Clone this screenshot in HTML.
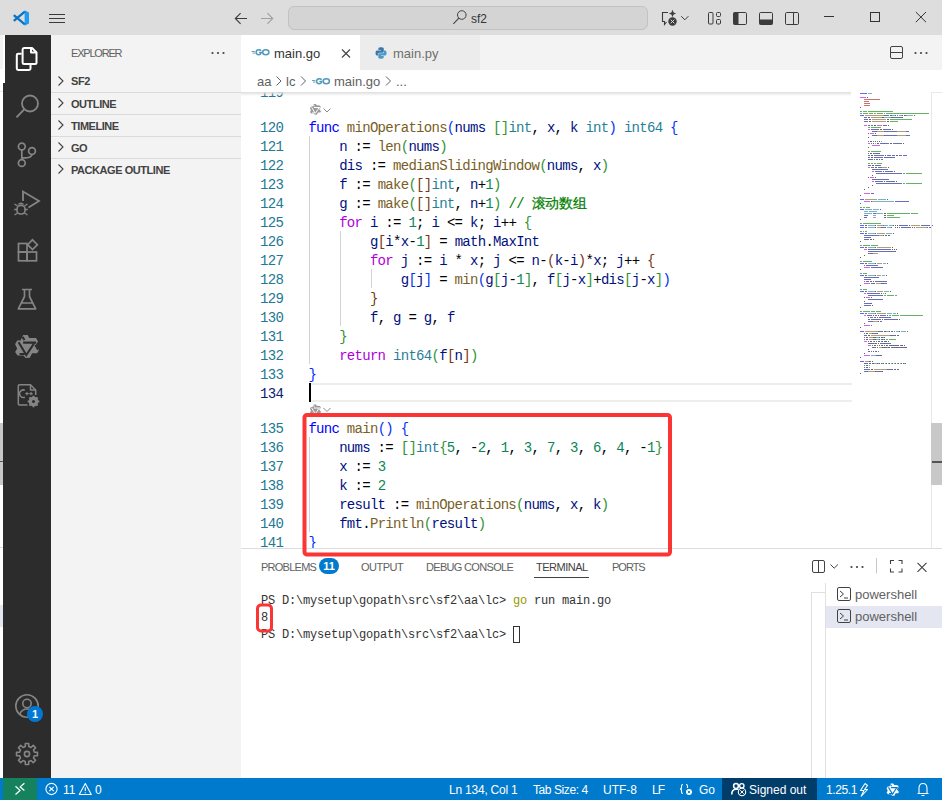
<!DOCTYPE html>
<html><head><meta charset="utf-8">
<style>
*{margin:0;padding:0;box-sizing:border-box}
html,body{width:942px;height:800px;overflow:hidden;background:#dddddd;font-family:"Liberation Sans",sans-serif;}
.a{position:absolute}
svg{position:absolute;overflow:visible}
#titlebar{left:0;top:0;width:942px;height:35px;background:#dddddd}
#cc{left:288px;top:6px;width:360px;height:24px;border:1px solid #c2c2c2;border-radius:6px;background:#d4d4d4}
#act{left:3px;top:35px;width:48px;height:743px;background:#2c2c2c}
#side{left:51px;top:35px;width:190px;height:743px;background:#f3f3f3}
#tabs{left:241px;top:35px;width:701px;height:35px;background:#f3f3f3}
#editor{left:241px;top:70px;width:701px;height:478px;background:#ffffff;overflow:hidden}
#panel{left:241px;top:548px;width:701px;height:230px;background:#ffffff;border-top:1px solid #dcdcdc}
#status{left:0;top:778px;width:942px;height:22px;background:#007acc}
.sec{position:absolute;left:0;width:190px;height:22px;border-top:1px solid #dadada;font-size:11px;font-weight:bold;letter-spacing:-0.45px;color:#424242;line-height:22px;padding-left:20px}
.code{position:absolute;left:67.4px;height:19px;line-height:19px;font-family:"Liberation Mono",monospace;font-size:14px;letter-spacing:-0.71px;white-space:pre;color:#000}
.ln{position:absolute;left:0;width:42.2px;text-align:right;height:19px;line-height:19px;font-family:"Liberation Mono",monospace;font-size:14px;letter-spacing:-0.71px;color:#237893}
.k{color:#0000ff}.f{color:#795e26}.p{color:#001080}.t{color:#267f99}.n{color:#098658}.c{color:#008000}.ctl{color:#af00db}
.ln.cur{color:#0b216f}
.b1{color:#0431fa}.b2{color:#319331}.b3{color:#7b3814}
.st{position:absolute;top:0;height:22px;line-height:22px;font-size:12px;color:#fff;white-space:nowrap}
.term{font-family:"Liberation Mono",monospace;font-size:12px;letter-spacing:-0.2px;white-space:pre;color:#333;height:17px;line-height:17px;padding-top:1px}
.pt{letter-spacing:-0.5px;padding-top:1px}
.st{padding-top:1px}
</style></head><body>
<div id="titlebar" class="a"></div>
<div id="cc" class="a"></div>
<div class="a" style="left:471px;top:7px;height:24px;line-height:24px;font-size:12px;color:#333">sf2</div>
<div id="act" class="a"></div>
<div id="side" class="a">
<div class="a" style="left:20px;top:1px;height:35px;line-height:35px;font-size:11px;letter-spacing:-1.2px;color:#616161">EXPLORER</div>
<div class="sec" style="top:35px;border-top:none">SF2</div>
<div class="sec" style="top:57px">OUTLINE</div>
<div class="sec" style="top:79px">TIMELINE</div>
<div class="sec" style="top:101px">GO</div>
<div class="sec" style="top:123px">PACKAGE OUTLINE</div>
</div>
<div id="tabs" class="a">
<div class="a" style="left:0;top:0;width:119px;height:35px;background:#fff"></div>
<div class="a" style="left:119px;top:0;width:120px;height:35px;background:#ececec"></div>
<div class="a" style="left:33px;top:1px;height:35px;line-height:35px;font-size:13px;color:#333333">main.go</div>
<div class="a" style="left:152px;top:1px;height:35px;line-height:35px;font-size:13px;color:#6f6f6f">main.py</div>
</div>
<div id="editor" class="a">
<div class="a" style="left:68px;top:313px;width:543px;height:19px;border-top:2px solid #eeeeee;border-bottom:2px solid #eeeeee"></div>
<div class="a" style="left:68px;top:66px;width:1px;height:228px;background:#d3d3d3"></div>
<div class="a" style="left:99px;top:161px;width:1px;height:95px;background:#d3d3d3"></div>
<div class="a" style="left:130px;top:199px;width:1px;height:19px;background:#d3d3d3"></div>
<div class="a" style="left:68px;top:367px;width:1px;height:95px;background:#d3d3d3"></div>
<div id="codewrap" class="a" style="left:0;top:2px;width:701px;height:478px">
<div class="ln" style="top:12px">119</div>
<div class="ln" style="top:47px">120</div>
<div class="code" style="top:47px"><span class="k">func</span> <span class="f">minOperations</span><span class="b1">(</span><span class="p">nums</span> <span class="b2">[]</span><span class="t">int</span>, <span class="p">x</span>, <span class="p">k</span> <span class="t">int</span><span class="b1">)</span> <span class="t">int64</span> <span class="b1">{</span></div>
<div class="ln" style="top:66px">121</div>
<div class="code" style="top:66px">    <span class="p">n</span> := <span class="f">len</span><span class="b2">(</span><span class="p">nums</span><span class="b2">)</span></div>
<div class="ln" style="top:85px">122</div>
<div class="code" style="top:85px">    <span class="p">dis</span> := <span class="f">medianSlidingWindow</span><span class="b2">(</span><span class="p">nums</span>, <span class="p">x</span><span class="b2">)</span></div>
<div class="ln" style="top:104px">123</div>
<div class="code" style="top:104px">    <span class="p">f</span> := <span class="f">make</span><span class="b2">(</span><span class="b3">[]</span><span class="t">int</span>, <span class="p">n</span>+<span class="n">1</span><span class="b2">)</span></div>
<div class="ln" style="top:123px">124</div>
<div class="code" style="top:123px">    <span class="p">g</span> := <span class="f">make</span><span class="b2">(</span><span class="b3">[]</span><span class="t">int</span>, <span class="p">n</span>+<span class="n">1</span><span class="b2">)</span> <span class="c">// <span style="font-size:14px;letter-spacing:-0.1px;-webkit-text-stroke:0.25px #008000">滚动数组</span></span></div>
<div class="ln" style="top:142px">125</div>
<div class="code" style="top:142px">    <span class="ctl">for</span> <span class="p">i</span> := <span class="n">1</span>; <span class="p">i</span> <= <span class="p">k</span>; <span class="p">i</span>++ <span class="b2">{</span></div>
<div class="ln" style="top:161px">126</div>
<div class="code" style="top:161px">        <span class="p">g</span><span class="b3">[</span><span class="p">i</span>*<span class="p">x</span>-<span class="n">1</span><span class="b3">]</span> = <span class="p">math</span>.<span class="p">MaxInt</span></div>
<div class="ln" style="top:180px">127</div>
<div class="code" style="top:180px">        <span class="ctl">for</span> <span class="p">j</span> := <span class="p">i</span> * <span class="p">x</span>; <span class="p">j</span> <= <span class="p">n</span>-<span class="b3">(</span><span class="p">k</span>-<span class="p">i</span><span class="b3">)</span>*<span class="p">x</span>; <span class="p">j</span>++ <span class="b3">{</span></div>
<div class="ln" style="top:199px">128</div>
<div class="code" style="top:199px">            <span class="p">g</span><span class="b1">[</span><span class="p">j</span><span class="b1">]</span> = <span class="f">min</span><span class="b1">(</span><span class="p">g</span><span class="b2">[</span><span class="p">j</span>-<span class="n">1</span><span class="b2">]</span>, <span class="p">f</span><span class="b2">[</span><span class="p">j</span>-<span class="p">x</span><span class="b2">]</span>+<span class="p">dis</span><span class="b2">[</span><span class="p">j</span>-<span class="p">x</span><span class="b2">]</span><span class="b1">)</span></div>
<div class="ln" style="top:218px">129</div>
<div class="code" style="top:218px">        <span class="b3">}</span></div>
<div class="ln" style="top:237px">130</div>
<div class="code" style="top:237px">        <span class="p">f</span>, <span class="p">g</span> = <span class="p">g</span>, <span class="p">f</span></div>
<div class="ln" style="top:256px">131</div>
<div class="code" style="top:256px">    <span class="b2">}</span></div>
<div class="ln" style="top:275px">132</div>
<div class="code" style="top:275px">    <span class="ctl">return</span> <span class="t">int64</span><span class="b2">(</span><span class="p">f</span><span class="b3">[</span><span class="p">n</span><span class="b3">]</span><span class="b2">)</span></div>
<div class="ln" style="top:294px">133</div>
<div class="code" style="top:294px"><span class="b1">}</span></div>
<div class="ln cur" style="top:313px">134</div>
<div class="ln" style="top:348px">135</div>
<div class="code" style="top:348px"><span class="k">func</span> <span class="f">main</span><span class="b1">()</span> <span class="b1">{</span></div>
<div class="ln" style="top:367px">136</div>
<div class="code" style="top:367px">    <span class="p">nums</span> := <span class="b2">[]</span><span class="t">int</span><span class="b2">{</span><span class="n">5</span>, -<span class="n">2</span>, <span class="n">1</span>, <span class="n">3</span>, <span class="n">7</span>, <span class="n">3</span>, <span class="n">6</span>, <span class="n">4</span>, -<span class="n">1</span><span class="b2">}</span></div>
<div class="ln" style="top:386px">137</div>
<div class="code" style="top:386px">    <span class="p">x</span> := <span class="n">3</span></div>
<div class="ln" style="top:405px">138</div>
<div class="code" style="top:405px">    <span class="p">k</span> := <span class="n">2</span></div>
<div class="ln" style="top:424px">139</div>
<div class="code" style="top:424px">    <span class="p">result</span> := <span class="f">minOperations</span><span class="b2">(</span><span class="p">nums</span>, <span class="p">x</span>, <span class="p">k</span><span class="b2">)</span></div>
<div class="ln" style="top:443px">140</div>
<div class="code" style="top:443px">    <span class="p">fmt</span>.<span class="f">Println</span><span class="b2">(</span><span class="p">result</span><span class="b2">)</span></div>
<div class="ln" style="top:462px">141</div>
<div class="code" style="top:462px"><span class="b1">}</span></div>
</div>
<div class="a" style="left:68px;top:313px;width:2px;height:19px;background:#000"></div>
<div class="a" style="left:0;top:0;width:701px;height:22px;background:#fff"></div>
<div class="a" style="left:0;top:22px;width:610px;height:4px;background:linear-gradient(#dddddd,rgba(255,255,255,0))"></div>
<div class="a bc" style="left:16px;top:1px;height:22px;line-height:22px;font-size:13px;color:#616161;white-space:nowrap">aa</div>
<div class="a bc" style="left:45px;top:1px;height:22px;line-height:22px;font-size:13px;color:#616161;white-space:nowrap">lc</div>
<div class="a bc" style="left:93px;top:1px;height:22px;line-height:22px;font-size:13px;color:#616161;white-space:nowrap">main.go</div>
<div class="a bc" style="left:155px;top:1px;height:22px;line-height:22px;font-size:13px;color:#616161;white-space:nowrap">...</div>
</div>
<div id="panel" class="a">
<div class="a pt" style="left:20px;top:0;height:35px;line-height:35px;font-size:11px;letter-spacing:-0.75px;color:#616161">PROBLEMS</div>
<div class="a" style="left:78px;top:9px;width:20px;height:16px;border-radius:8px;background:#007acc;color:#fff;font-size:11px;font-weight:bold;text-align:center;line-height:16px">11</div>
<div class="a pt" style="left:120px;top:0;height:35px;line-height:35px;font-size:11px;color:#616161">OUTPUT</div>
<div class="a pt" style="left:185px;top:0;height:35px;line-height:35px;font-size:11px;letter-spacing:-0.68px;color:#616161">DEBUG CONSOLE</div>
<div class="a pt" style="left:295px;top:0;height:35px;line-height:35px;font-size:11px;color:#424242">TERMINAL</div>
<div class="a" style="left:293px;top:28px;width:55px;height:1px;background:#424242"></div>
<div class="a pt" style="left:371px;top:0;height:35px;line-height:35px;font-size:11px;letter-spacing:-1px;color:#616161">PORTS</div>
<div class="a term" style="left:20px;top:43px">PS D:\mysetup\gopath\src\sf2\aa\lc&gt; <span style="color:#949800">go</span> run main.go</div>
<div class="a term" style="left:20px;top:60px">8</div>
<div class="a term" style="left:20px;top:77px">PS D:\mysetup\gopath\src\sf2\aa\lc&gt; </div>
<div class="a" style="left:272px;top:77px;width:7px;height:17px;border:1px solid #333"></div>
<div class="a" style="left:570px;top:43px;width:1px;height:187px;background:#e0e0e0"></div>
<div class="a" style="left:570px;top:43px;width:14px;height:1px;background:#e0e0e0"></div>
<div class="a" style="left:584px;top:34px;width:1px;height:196px;background:#e0e0e0"></div>
<div class="a" style="left:585px;top:57px;width:116px;height:22px;background:#e4e6f1"></div>
<div class="a" style="left:614px;top:35px;height:22px;line-height:22px;font-size:13px;color:#616161">powershell</div>
<div class="a" style="left:614px;top:57px;height:22px;line-height:22px;font-size:13px;color:#616161">powershell</div>
</div>
<div id="status" class="a">
<div class="a" style="left:3px;top:0;width:34px;height:22px;background:#16825d"></div>
<div class="st" style="left:63px">11</div>
<div class="st" style="left:95px">0</div>
<div class="st" style="left:449px;letter-spacing:-0.22px">Ln 134, Col 1</div>
<div class="st" style="left:533px;letter-spacing:-0.42px">Tab Size: 4</div>
<div class="st" style="left:603px">UTF-8</div>
<div class="st" style="left:652px;letter-spacing:-1px">LF</div>
<div class="st" style="left:699px">Go</div>
<div class="a" style="left:722px;top:0;width:95px;height:22px;background:#003d6b"></div>
<div class="st" style="left:749px">Signed out</div>
<div class="st" style="left:826px;letter-spacing:-0.4px">1.25.1</div>
</div>
<svg class="a" style="left:0;top:0" width="942" height="800" viewBox="0 0 942 800" fill="none">
<!-- left wrap strip -->
<rect x="0" y="35" width="3" height="34" fill="#f3f3f3"/>
<rect x="0" y="69" width="3" height="14" fill="#ffffff"/>
<rect x="0" y="83" width="3" height="695" fill="#ffffff"/>
<rect x="0" y="91" width="3" height="1" fill="#e8e8e8"/>
<rect x="0" y="423" width="3" height="62" fill="#c8c8c8"/>
<rect x="0" y="461" width="3" height="1" fill="#555"/>
<rect x="0" y="547" width="3" height="1" fill="#dcdcdc"/>
<rect x="0" y="605" width="3" height="22" fill="#e4e6f1"/>
<rect x="0" y="778" width="3" height="22" fill="#007acc"/>
<!-- active indicator -->
<rect x="3" y="35" width="2" height="48" fill="#ffffff"/>
<!-- VS Code logo -->
<g transform="translate(13,10)">
<path d="M11.6 0.3 L16 2.4 V13.6 L11.6 15.7 Z" fill="#1f9cf0"/>
<path d="M11.8 1.6 L0.8 10.9 M11.8 14.4 L0.8 5.1" stroke="#0a74c4" stroke-width="2.3"/>
</g>
<!-- hamburger -->
<path d="M49 14.5H65M49 18.5H65M49 22.5H65" stroke="#3b3b3b" stroke-width="1.1"/>
<!-- back / forward -->
<path d="M247 18.5H235.8M240.6 13.2L235.3 18.5L240.6 23.8" stroke="#3b3b3b" stroke-width="1.1"/>
<path d="M261 18.5H272.2M267.4 13.2L272.7 18.5L267.4 23.8" stroke="#a0a0a0" stroke-width="1.1"/>
<!-- search in command center -->
<circle cx="461.8" cy="15" r="4.3" stroke="#424242" stroke-width="1"/>
<path d="M458.8 18.2L453.4 23.8" stroke="#424242" stroke-width="1.1"/>
<!-- copilot icon -->
<path d="M668 12.5H662.5V21.5H664.5V24.5L666.5 22" stroke="#3b3b3b" stroke-width="1.1" fill="none"/>
<path d="M672.5 9.8 L673.6 12.4 L676.2 13.5 L673.6 14.6 L672.5 17.2 L671.4 14.6 L668.8 13.5 L671.4 12.4 Z" fill="#3b3b3b"/>
<circle cx="672.5" cy="21.5" r="4.2" fill="#3b3b3b"/>
<path d="M670.7 19.7L674.3 23.3M674.3 19.7L670.7 23.3" stroke="#dddddd" stroke-width="1"/>
<path d="M681.2 16.2L684.8 19.8L688.4 16.2" stroke="#3b3b3b" stroke-width="1"/>
<!-- layout icons -->
<rect x="708.5" y="12.5" width="4.5" height="11.5" rx="1" stroke="#3b3b3b" stroke-width="1"/>
<rect x="716.5" y="12.5" width="4" height="4" rx="1" stroke="#3b3b3b" stroke-width="1"/>
<rect x="716.5" y="19.5" width="4" height="4.5" rx="1" stroke="#3b3b3b" stroke-width="1"/>
<rect x="733.5" y="12.5" width="13" height="12" rx="1.2" stroke="#3b3b3b" stroke-width="1"/>
<rect x="733.5" y="12.5" width="5" height="12" fill="#3b3b3b"/>
<rect x="759.5" y="12.5" width="13" height="12" rx="1.2" stroke="#3b3b3b" stroke-width="1"/>
<rect x="759.5" y="19.5" width="13" height="5" fill="#3b3b3b"/>
<rect x="785.5" y="12.5" width="13" height="12" rx="1.2" stroke="#3b3b3b" stroke-width="1"/>
<path d="M793.5 12.5V24.5" stroke="#3b3b3b" stroke-width="1"/>
<!-- window controls -->
<path d="M824 16.5H834" stroke="#333" stroke-width="1"/>
<rect x="870.5" y="12.5" width="9" height="9" stroke="#333" stroke-width="1"/>
<path d="M915.8 12L926 22.2M926 12L915.8 22.2" stroke="#333" stroke-width="1"/>
</svg>

<svg class="a" style="left:0;top:0" width="942" height="800" viewBox="0 0 942 800" fill="none">
<!-- activity: explorer (white) -->
<g stroke="#ffffff" stroke-width="2" stroke-linejoin="round">
<path d="M22.6 49.5 Q22.6 48 24 48 H32 L36.5 52.5 V62.5 Q36.5 64 35 64 H24 Q22.6 64 22.6 62.5 Z"/>
<path d="M31 48 V52.6 H36.5"/>
<path d="M21.6 53.8 H18.2 Q16.8 53.8 16.8 55.2 V68.6 Q16.8 70 18.2 70 H29 Q30.5 70 30.5 68.6 V64.8"/>
</g>
<!-- search -->
<circle cx="30" cy="103.5" r="8" stroke="#858585" stroke-width="1.8"/>
<path d="M24.2 109.3L16.5 117.3" stroke="#858585" stroke-width="1.9"/>
<!-- scm -->
<g stroke="#858585" stroke-width="1.7">
<circle cx="21.8" cy="146.5" r="3.4"/>
<circle cx="32" cy="151" r="3.4"/>
<circle cx="21.8" cy="163" r="3.4"/>
<path d="M21.8 149.9V159.6M32 154.4 Q31.5 157.8 26 157.8 H21.8"/>
</g>
<!-- debug -->
<g stroke="#858585" stroke-width="1.8">
<path d="M23 201V191.5L39 201L28.5 207.5"/>
</g>
<g fill="#858585">
<path d="M17.5 204.5 Q21 200.5 24.5 204.5 Z"/>
<rect x="17" y="205.5" width="8" height="8.5" rx="3.5" stroke="#858585" stroke-width="1.6" fill="none"/>
<path d="M14.5 204L17.5 206M27.5 204L24.5 206M14.2 209.5H17M24.8 209.5H27.8M14.5 215L17.5 213M27.5 215L24.5 213" stroke="#858585" stroke-width="1.4"/>
</g>
<!-- extensions -->
<g stroke="#858585" stroke-width="1.7">
<rect x="18.5" y="243.5" width="8.5" height="8.5"/>
<rect x="18.5" y="252" width="8.5" height="8.8"/>
<rect x="27" y="252" width="9.5" height="8.8"/>
<path d="M32.5 239.8 L37.4 244.7 L32.5 249.6 L27.6 244.7 Z"/>
</g>
<!-- testing -->
<g stroke="#858585" stroke-width="1.7" stroke-linejoin="round">
<path d="M22 289.5H32M24.5 289.5V296.5L18.3 308.8H35.7L29.5 296.5V289.5M21 303H33"/>
</g>
<!-- knot icon -->
<g transform="translate(13,333) scale(0.035)">
<path d="M290 60 L420 60 L465 140 L660 145 L715 240 L655 330 L745 475 L690 575 L545 580 L480 710 L360 715 L300 640 L130 640 L60 540 L120 440 L60 320 L120 215 L215 215 Z" fill="#858585"/>
<path d="M160 265 L380 630 L600 300 M290 275 L660 275 M270 110 L330 200 M640 340 L720 480 M190 600 L330 600" stroke="#2c2c2c" stroke-width="60" fill="none"/>
</g>
<!-- c++ config -->
<g stroke="#858585" stroke-width="1.5" stroke-linejoin="round">
<path d="M27.5 405 H19.5 Q18.3 405 18.3 403.8 V386 Q18.3 384.8 19.5 384.8 H30.5 L35.7 390 V395"/>
<path d="M30.5 384.8V390H35.7"/>
<path d="M24.8 390.2 A3.8 3.8 0 1 0 24.8 397.2"/>
</g>
<path d="M25.3 393.6H28.7M27 391.9V395.3M29.3 393.6H32.7M31 391.9V395.3" stroke="#858585" stroke-width="1.1"/>
<g transform="translate(33.5,401.5)">
<circle r="3.6" stroke="#858585" stroke-width="2.4"/>
<path d="M0 -5.8V5.8M-5.8 0H5.8M-4.1 -4.1L4.1 4.1M4.1 -4.1L-4.1 4.1" stroke="#858585" stroke-width="2"/>
<circle r="1.5" fill="#2c2c2c"/>
</g>
<!-- accounts -->
<circle cx="27" cy="706" r="11.2" stroke="#858585" stroke-width="1.6"/>
<circle cx="27" cy="703.5" r="4.2" stroke="#858585" stroke-width="1.6"/>
<path d="M19.5 714.5 Q22 709 27 709 Q32 709 34.5 714.5" stroke="#858585" stroke-width="1.6"/>
<circle cx="35" cy="714" r="8" fill="#0078d4"/>
<!-- gear -->
<g transform="translate(27,754)" stroke="#858585" stroke-width="1.6" stroke-linejoin="round">
<path d="M-1.77 -7.39 L-1.66 -10.47 L1.66 -10.47 L1.77 -7.39 L3.97 -6.48 L6.23 -8.58 L8.58 -6.23 L6.48 -3.97 L7.39 -1.77 L10.47 -1.66 L10.47 1.66 L7.39 1.77 L6.48 3.97 L8.58 6.23 L6.23 8.58 L3.97 6.48 L1.77 7.39 L1.66 10.47 L-1.66 10.47 L-1.77 7.39 L-3.97 6.48 L-6.23 8.58 L-8.58 6.23 L-6.48 3.97 L-7.39 1.77 L-10.47 1.66 L-10.47 -1.66 L-7.39 -1.77 L-6.48 -3.97 L-8.58 -6.23 L-6.23 -8.58 L-3.97 -6.48 Z"/>
<circle r="2.6"/>
</g>
<!-- sidebar chevrons and ... -->
<g stroke="#424242" stroke-width="1.1">
<path d="M58.5 76.5L63 81L58.5 85.5M58.5 98.5L63 103L58.5 107.5M58.5 120.5L63 125L58.5 129.5M58.5 142.5L63 147L58.5 151.5M58.5 164.5L63 169L58.5 173.5"/>
</g>
<g fill="#424242"><circle cx="212.5" cy="53" r="1.1"/><circle cx="218" cy="53" r="1.1"/><circle cx="223.5" cy="53" r="1.1"/></g>
</svg>

<svg class="a" style="left:0;top:0" width="942" height="800" viewBox="0 0 942 800" fill="none">
<defs>
<g id="knot">
<path d="M290 60 L420 60 L465 140 L660 145 L715 240 L655 330 L745 475 L690 575 L545 580 L480 710 L360 715 L300 640 L130 640 L60 540 L120 440 L60 320 L120 215 L215 215 Z"/>
</g>
<g id="knotl">
<path d="M160 265 L380 630 L600 300 M290 275 L660 275 M270 110 L330 200 M640 340 L720 480 M190 600 L330 600" stroke-width="60" fill="none"/>
</g>
<g id="goicon">
<path d="M0 3.2 H3.4 M1 4.8 H3.4" stroke="#519aba" stroke-width="0.9"/>
<path d="M9.6 2.4 Q8.9 1.4 7.5 1.4 Q4.6 1.4 4.6 4 Q4.6 6.4 7.2 6.4 Q9.3 6.4 9.8 4.3 H7.4" stroke="#519aba" stroke-width="1.5"/>
<ellipse cx="14.3" cy="3.9" rx="3.1" ry="2.5" stroke="#519aba" stroke-width="1.5"/>
</g>
</defs>
<!-- tab go icon -->
<use href="#goicon" transform="translate(251.5,48.3)"/>
<!-- close x -->
<path d="M342 49.5L350 57.5M350 49.5L342 57.5" stroke="#424242" stroke-width="1.1"/>
<!-- python icon -->
<g transform="translate(375.5,47)">
<path d="M5.5 0.3 C2.8 0.3 2.9 1.5 2.9 1.5 V3 H5.6 V3.5 H1.8 C1.8 3.5 0 3.3 0 6 C0 8.7 1.6 8.6 1.6 8.6 H2.6 V7.3 C2.6 7.3 2.5 5.7 4.1 5.7 H6.8 C6.8 5.7 8.3 5.7 8.3 4.3 V1.8 C8.3 1.8 8.5 0.3 5.5 0.3 Z" fill="#3c78a8"/>
<path d="M5.6 11.7 C8.3 11.7 8.2 10.5 8.2 10.5 V9 H5.5 V8.5 H9.3 C9.3 8.5 11.1 8.7 11.1 6 C11.1 3.3 9.5 3.4 9.5 3.4 H8.5 V4.7 C8.5 4.7 8.6 6.3 7 6.3 H4.3 C4.3 6.3 2.8 6.3 2.8 7.7 V10.2 C2.8 10.2 2.6 11.7 5.6 11.7 Z" fill="#4b9ac8"/>
</g>
<!-- breadcrumb chevrons -->
<path d="M276.5 76.5L281 81L276.5 85.5M301 76.5L305.5 81L301 85.5M386 76.5L390.5 81L386 85.5" stroke="#616161" stroke-width="1"/>
<use href="#goicon" transform="translate(312,77.3)"/>
<!-- editor actions -->
<rect x="890.5" y="46.5" width="12" height="12" rx="1.5" stroke="#424242" stroke-width="1"/>
<path d="M890.5 52.5H902.5" stroke="#424242" stroke-width="1"/>
<g fill="#424242"><circle cx="915.5" cy="53" r="1.1"/><circle cx="921" cy="53" r="1.1"/><circle cx="926.5" cy="53" r="1.1"/></g>
<!-- codelens icons -->
<use href="#knot" transform="translate(309,103) scale(0.0165)" fill="#9a9a9a"/><use href="#knotl" transform="translate(309,103) scale(0.0165)" stroke="#ffffff"/>
<path d="M323.5 108.5L327 112L330.5 108.5" stroke="#8a8a8a" stroke-width="1"/>
<use href="#knot" transform="translate(309,403.5) scale(0.0165)" fill="#9a9a9a"/><use href="#knotl" transform="translate(309,403.5) scale(0.0165)" stroke="#ffffff"/>
<path d="M323.5 408L327 411.5L330.5 408" stroke="#8a8a8a" stroke-width="1"/>
<!-- panel actions -->
<rect x="812.5" y="560.5" width="12" height="12" rx="1.5" stroke="#424242" stroke-width="1"/>
<path d="M818.5 560.5V572.5" stroke="#424242" stroke-width="1"/>
<path d="M830.5 564.5L834.2 568.2L837.9 564.5" stroke="#424242" stroke-width="1"/>
<g fill="#424242"><circle cx="851.5" cy="567" r="1.1"/><circle cx="857" cy="567" r="1.1"/><circle cx="862.5" cy="567" r="1.1"/></g>
<path d="M876.5 558V573.5" stroke="#c8c8c8" stroke-width="1"/>
<path d="M890.5 564V560.5H894M898.5 560.5H902V564M902 568.5V572H898.5M894 572H890.5V568.5" stroke="#424242" stroke-width="1.1"/>
<path d="M917.5 562.8L926.5 571.8M926.5 562.8L917.5 571.8" stroke="#424242" stroke-width="1.1"/>
<!-- terminal icons -->
<rect x="837.5" y="587.5" width="13" height="13" rx="1.5" stroke="#424242" stroke-width="1"/>
<path d="M840 591L843.5 594L840 597M844 598H848" stroke="#424242" stroke-width="1"/>
<rect x="837.5" y="609.5" width="13" height="13" rx="1.5" stroke="#424242" stroke-width="1"/>
<path d="M840 613L843.5 616L840 619M844 620H848" stroke="#424242" stroke-width="1"/>
<!-- status icons -->
<path d="M15.5 786.3L20 790.4L15.5 794.5M24.4 783.3L20.2 786.9L24.4 790.5" stroke="#fff" stroke-width="1.2"/>
<circle cx="51.5" cy="789" r="5.6" stroke="#fff" stroke-width="1.1"/>
<path d="M49.3 786.8L53.7 791.2M53.7 786.8L49.3 791.2" stroke="#fff" stroke-width="1.1"/>
<path d="M85.3 783.5L91.3 794.5H79.3Z" stroke="#fff" stroke-width="1.1" stroke-linejoin="round"/>
<path d="M85.3 787.5V791M85.3 792.3V793.3" stroke="#fff" stroke-width="1.1"/>
<path d="M683 784.5 Q681.5 784.5 681.5 786 V788 L680.5 789 L681.5 790 V792 Q681.5 793.5 683 793.5" stroke="#fff" stroke-width="1.1"/>
<circle cx="689" cy="792" r="3" fill="#fff"/><path d="M687.8 790.8L690.2 793.2M690.2 790.8L687.8 793.2" stroke="#007acc" stroke-width="0.9"/>
<path d="M686 784.5 Q687.5 784.5 687.5 786 V788" stroke="#fff" stroke-width="1.1"/>
<circle cx="736" cy="786" r="2.4" stroke="#fff" stroke-width="1.5"/>
<circle cx="741.8" cy="785.8" r="2.2" stroke="#fff" stroke-width="1.4"/>
<path d="M731.8 794.5 Q731.5 789.5 736 789.3 H738.5" stroke="#fff" stroke-width="1.6"/>
<circle cx="742" cy="792" r="3.7" fill="#003d6b" stroke="#fff" stroke-width="1.1"/>
<path d="M740.3 790.3L743.7 793.7M743.7 790.3L740.3 793.7" stroke="#fff" stroke-width="1"/>
<path d="M865 783.5L860.5 790.5H864L861 796.5M865 783.5L867.5 785.5L864.5 789.5H867.5L861 796.5" stroke="#fff" stroke-width="1.1" stroke-linejoin="round"/>
<use href="#knot" transform="translate(885.5,782.5) scale(0.0185)" fill="#fff"/><use href="#knotl" transform="translate(885.5,782.5) scale(0.0185)" stroke="#007acc"/>
<path d="M919 793.5V788.5 Q919 783.5 923 783.5 Q927 783.5 927 788.5 V793.5 H919 M917.5 793.5H928.5M921.5 795.5H924.5" stroke="#fff" stroke-width="1.1"/>
<!-- red boxes -->
<rect x="304.5" y="415" width="365.5" height="139.5" rx="2.5" stroke="#fb3434" stroke-width="4"/>
<rect x="257.5" y="605" width="14" height="26" rx="3.5" stroke="#fb3434" stroke-width="3"/>
</svg>
<div class="a" style="left:27px;top:706px;width:16px;height:16px;line-height:16px;text-align:center;font-size:11px;font-weight:bold;color:#fff">1</div>

<svg class="a" style="left:0;top:0" width="942" height="800" viewBox="0 0 942 800" fill="none" opacity="0.6">
<path d="M860 93.5h7M860 115.5h4M860 199.5h4M895 201.5h5M860 209.5h4M873 213.5h3M860 225.5h4M860 227.5h4M860 233.5h4M860 247.5h4M860 263.5h4M860 275.5h4M860 291.5h4M860 313.5h4M860 331.5h4M860 361.5h4" stroke="#0000ff" stroke-width="1"/>
<path d="M868 93.5h4M892 115.5h3M899 115.5h3M906 115.5h7M884 117.5h7M878 199.5h8M872 201.5h22M865 209.5h7M873 209.5h6M864 211.5h4M869 211.5h8M864 213.5h8M876 213.5h7M873 215.5h3M873 217.5h3M868 225.5h7M884 225.5h4M889 225.5h4M868 227.5h7M887 227.5h4M868 233.5h7M886 233.5h6M868 247.5h7M868 263.5h7M883 263.5h3M868 275.5h7M882 275.5h3M868 291.5h7M884 291.5h5M868 313.5h7M887 313.5h5M893 313.5h3M886 331.5h3M896 331.5h3M901 331.5h5M876 337.5h3M876 339.5h3M871 355.5h5M874 363.5h3" stroke="#267f99" stroke-width="1"/>
<path d="M860 97.5h6M864 125.5h3M877 125.5h5M868 129.5h2M870 133.5h4M868 143.5h2M872 145.5h8M868 167.5h2M872 171.5h2M870 177.5h4M872 181.5h2M864 193.5h6M864 201.5h6M864 249.5h3M864 267.5h6M864 283.5h6M864 293.5h2M866 297.5h4M864 315.5h2M864 325.5h6M864 341.5h3M868 345.5h3M864 355.5h6" stroke="#af00db" stroke-width="1"/>
<path d="M867 97.5h1M860 107.5h1M884 115.5h1M890 115.5h2M895 115.5h1M902 115.5h1M904 115.5h2M914 115.5h1M868 117.5h2M882 117.5h2M891 117.5h2M902 117.5h1M869 119.5h2M887 119.5h2M869 121.5h2M887 121.5h2M869 125.5h1M874 125.5h2M888 125.5h1M880 129.5h2M892 129.5h1M876 131.5h1M884 131.5h1M868 133.5h1M875 133.5h1M876 135.5h1M884 135.5h1M868 137.5h1M870 141.5h2M875 141.5h1M879 141.5h1M873 143.5h1M877 143.5h2M890 143.5h2M903 143.5h1M868 147.5h1M870 153.5h2M877 153.5h1M879 153.5h1M871 155.5h2M885 155.5h1M896 155.5h2M871 157.5h2M884 157.5h1M874 159.5h1M879 159.5h1M872 165.5h2M875 167.5h2M888 167.5h1M883 171.5h1M894 171.5h1M872 175.5h1M868 177.5h1M875 177.5h1M884 181.5h1M896 181.5h1M872 185.5h1M868 187.5h1M864 189.5h1M860 195.5h1M887 199.5h1M871 201.5h1M860 203.5h1M880 209.5h1M884 213.5h2M884 215.5h2M884 217.5h2M860 219.5h1M865 225.5h1M875 225.5h1M893 225.5h1M895 225.5h1M897 225.5h1M909 225.5h1M931 225.5h0M865 227.5h1M875 227.5h1M881 227.5h1M891 227.5h1M895 227.5h1M897 227.5h1M912 227.5h1M914 227.5h1M927 227.5h1M865 233.5h1M875 233.5h1M893 233.5h1M883 235.5h1M885 235.5h2M888 235.5h2M870 239.5h2M873 239.5h1M860 241.5h1M865 247.5h1M875 247.5h1M892 247.5h1M892 249.5h1M894 249.5h1M896 249.5h1M895 251.5h1M864 255.5h1M860 257.5h1M865 263.5h1M875 263.5h1M887 263.5h1M860 269.5h1M865 275.5h1M875 275.5h1M886 275.5h1M870 279.5h1M871 281.5h1M873 281.5h1M881 283.5h2M860 285.5h1M865 291.5h1M875 291.5h1M890 291.5h1M881 293.5h1M885 293.5h1M882 295.5h1M864 297.5h1M871 297.5h1M864 301.5h1M871 303.5h1M872 305.5h1M860 307.5h1M865 313.5h1M875 313.5h1M897 313.5h1M873 315.5h1M878 315.5h1M887 315.5h1M875 317.5h1M877 317.5h1M869 319.5h1M882 319.5h1M897 319.5h1M899 319.5h1M878 321.5h1M864 323.5h1M860 327.5h1M878 331.5h1M884 331.5h2M889 331.5h1M892 331.5h1M899 331.5h1M907 331.5h1M866 333.5h2M872 333.5h1M877 333.5h1M868 335.5h2M890 335.5h1M895 335.5h1M898 335.5h1M866 337.5h2M873 337.5h3M879 337.5h1M882 337.5h1M884 337.5h1M866 339.5h2M873 339.5h3M879 339.5h1M882 339.5h1M884 339.5h1M870 341.5h2M874 341.5h1M878 341.5h2M882 341.5h1M885 341.5h2M888 341.5h1M869 343.5h1M871 343.5h1M873 343.5h1M875 343.5h2M878 343.5h1M884 343.5h1M874 345.5h2M879 345.5h1M882 345.5h1M886 345.5h2M890 345.5h2M893 345.5h1M895 345.5h2M898 345.5h1M901 345.5h2M904 345.5h1M873 347.5h1M875 347.5h1M877 347.5h1M882 347.5h1M884 347.5h1M886 347.5h1M888 347.5h2M892 347.5h1M894 347.5h1M896 347.5h2M901 347.5h1M903 347.5h1M905 347.5h2M868 349.5h1M869 351.5h1M873 351.5h1M876 351.5h1M864 353.5h1M876 355.5h1M878 355.5h1M880 355.5h2M860 357.5h1M869 361.5h2M872 361.5h1M869 363.5h2M872 363.5h2M877 363.5h1M879 363.5h1M881 363.5h1M883 363.5h1M886 363.5h1M889 363.5h1M892 363.5h1M895 363.5h1M898 363.5h1M901 363.5h1M903 363.5h1M905 363.5h1M866 365.5h2M866 367.5h2M871 369.5h2M887 369.5h1M892 369.5h1M895 369.5h1M898 369.5h1M867 371.5h1M875 371.5h1M882 371.5h1M860 373.5h1" stroke="#000000" stroke-width="1"/>
<path d="M864 99.5h16M864 101.5h5M864 103.5h6M864 105.5h6" stroke="#a31515" stroke-width="1"/>
<path d="M860 111.5h2M863 111.5h4M868 111.5h25M860 113.5h2M863 113.5h5M869 113.5h4M874 113.5h2M877 113.5h6M884 113.5h1M886 113.5h43M890 119.5h22M890 121.5h8M868 127.5h2M871 127.5h10M868 151.5h2M871 151.5h10M868 163.5h2M871 163.5h2M874 163.5h2M877 163.5h5M903 173.5h2M906 173.5h16M903 183.5h2M906 183.5h16M860 207.5h2M863 207.5h2M866 207.5h4M887 213.5h23M911 213.5h7M887 215.5h7M887 217.5h13M860 223.5h2M863 223.5h18M860 231.5h2M863 231.5h1M865 231.5h2M860 245.5h2M863 245.5h7M871 245.5h7M860 261.5h2M863 261.5h9M860 273.5h2M863 273.5h4M860 289.5h2M863 289.5h4M884 295.5h2M887 295.5h7M895 295.5h2M860 311.5h2M863 311.5h7M871 311.5h4M876 311.5h5M889 315.5h2M892 315.5h7M900 315.5h23M886 339.5h2M889 339.5h7" stroke="#008000" stroke-width="1"/>
<path d="M865 115.5h19M871 117.5h11M872 119.5h14M872 121.5h14M877 131.5h7M897 131.5h9M877 135.5h7M897 135.5h9M882 167.5h5M865 199.5h12M877 225.5h6M911 225.5h9M877 227.5h4M916 227.5h11M877 233.5h8M879 235.5h4M877 247.5h14M873 253.5h5M877 263.5h5M877 275.5h4M876 283.5h5M877 291.5h6M877 313.5h9M873 321.5h5M865 331.5h13M869 333.5h3M871 335.5h19M869 337.5h4M869 339.5h4M879 347.5h3M865 361.5h4M874 369.5h13M868 371.5h7" stroke="#795e26" stroke-width="1"/>
<path d="M885 115.5h4M897 115.5h1M864 117.5h3M893 117.5h9M864 119.5h4M864 121.5h4M868 125.5h1M871 125.5h2M883 125.5h4M871 129.5h8M883 129.5h8M872 131.5h4M885 131.5h12M906 131.5h3M872 135.5h4M885 135.5h12M906 135.5h4M868 141.5h1M873 141.5h1M877 141.5h1M871 143.5h1M880 143.5h9M893 143.5h9M868 153.5h1M873 153.5h4M878 153.5h1M868 155.5h2M874 155.5h10M887 155.5h4M892 155.5h3M899 155.5h3M903 155.5h4M868 157.5h2M874 157.5h9M885 157.5h10M868 159.5h5M876 159.5h2M881 159.5h2M868 165.5h3M875 165.5h6M871 167.5h3M878 167.5h4M872 169.5h16M875 171.5h7M885 171.5h8M876 173.5h26M872 179.5h17M875 181.5h8M886 181.5h9M876 183.5h26M871 193.5h3M900 201.5h9M864 215.5h4M864 217.5h3M866 225.5h1M883 225.5h1M899 225.5h9M921 225.5h9M933 225.5h-2M866 227.5h1M882 227.5h4M899 227.5h1M901 227.5h10M929 227.5h2M866 233.5h1M864 235.5h15M864 237.5h7M864 239.5h5M866 247.5h1M868 249.5h23M868 251.5h27M868 253.5h5M866 263.5h1M864 265.5h1M866 265.5h12M871 267.5h12M866 275.5h1M864 277.5h15M864 279.5h6M864 281.5h1M866 281.5h3M870 281.5h1M875 281.5h12M871 283.5h4M883 283.5h4M866 291.5h1M867 293.5h13M868 295.5h14M868 299.5h15M864 303.5h7M864 305.5h7M866 313.5h1M867 315.5h5M875 315.5h2M880 315.5h6M868 317.5h1M870 317.5h3M874 317.5h1M879 317.5h12M868 319.5h1M871 319.5h10M884 319.5h13M868 321.5h5M880 321.5h2M871 325.5h1M879 331.5h4M891 331.5h1M894 331.5h1M864 333.5h1M873 333.5h4M864 335.5h3M891 335.5h4M897 335.5h1M864 337.5h1M881 337.5h1M864 339.5h1M881 339.5h1M868 341.5h1M876 341.5h1M881 341.5h1M884 341.5h1M868 343.5h1M870 343.5h1M872 343.5h1M880 343.5h4M885 343.5h6M872 345.5h1M877 345.5h1M881 345.5h1M884 345.5h1M889 345.5h1M892 345.5h1M894 345.5h1M897 345.5h1M900 345.5h1M872 347.5h1M874 347.5h1M883 347.5h1M885 347.5h1M891 347.5h1M893 347.5h1M895 347.5h1M898 347.5h3M902 347.5h1M904 347.5h1M868 351.5h1M871 351.5h1M875 351.5h1M878 351.5h1M877 355.5h1M879 355.5h1M864 363.5h4M864 365.5h1M864 367.5h1M864 369.5h6M888 369.5h4M894 369.5h1M897 369.5h1M864 371.5h3M876 371.5h6" stroke="#001080" stroke-width="1"/>
<path d="M881 141.5h1M875 143.5h1M883 293.5h1M883 337.5h1M883 339.5h1M873 341.5h1M874 343.5h1M887 347.5h1M878 363.5h1M882 363.5h1M885 363.5h1M888 363.5h1M891 363.5h1M894 363.5h1M897 363.5h1M900 363.5h1M904 363.5h1M869 365.5h1M869 367.5h1" stroke="#098658" stroke-width="1"/>
</svg>
<div class="a" style="left:931px;top:92px;width:1px;height:456px;background:#e8e8e8"></div>
<div class="a" style="left:931px;top:92px;width:11px;height:1px;background:#e8e8e8"></div>
<div class="a" style="left:931px;top:423px;width:11px;height:62px;background:#c8c8c8"></div>
<div class="a" style="left:932px;top:461px;width:10px;height:2px;background:#555555"></div>
</body></html>
